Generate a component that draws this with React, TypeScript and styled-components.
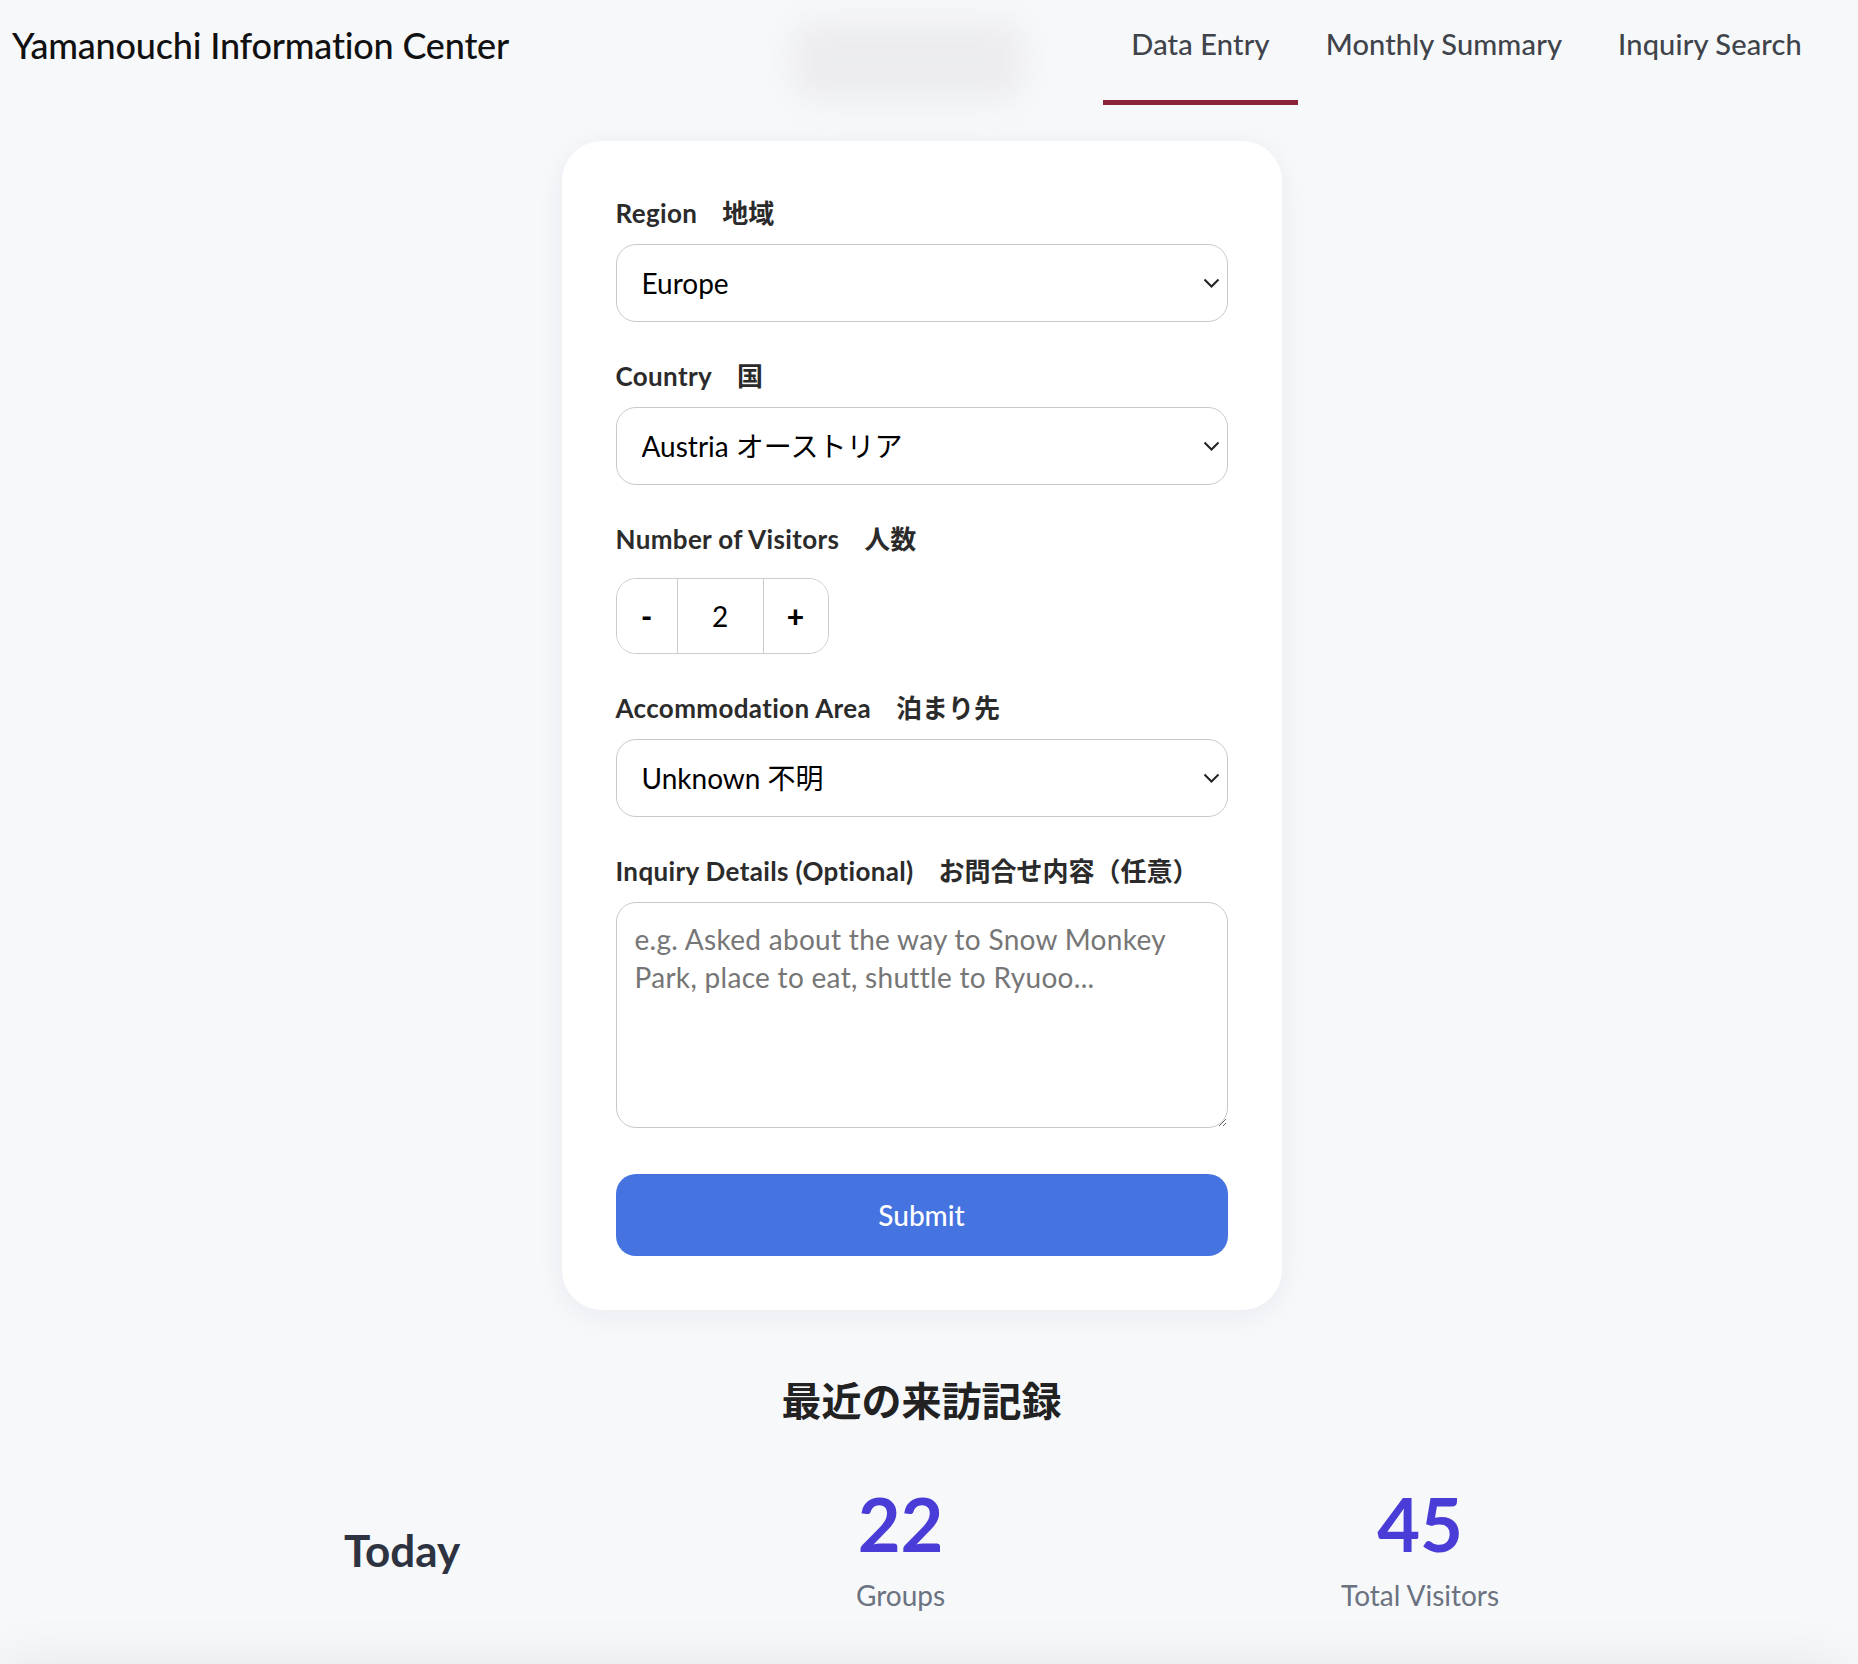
import React, { useState } from "react";
import styled, { createGlobalStyle } from "styled-components";

const GlobalStyle = createGlobalStyle`
  html, body { margin: 0; padding: 0; background: #f7f8fa; }
  html { scrollbar-width: none; }
  ::-webkit-scrollbar { display: none; }
  body {
    font-family: Lato, "Noto Sans CJK JP", sans-serif;
    color: #222;
    -webkit-font-smoothing: antialiased;
  }
  * { box-sizing: border-box; }
`;

const Page = styled.div`
  padding-right: 15px;
  min-height: 1664px;
  overflow: hidden;
`;

const Header = styled.header`
  display: flex;
  align-items: flex-start;
  height: 105px;
  padding: 0 13px 0 12px;
`;

const Brand = styled.h1`
  margin: 24px 0 0;
  font-size: 36px;
  line-height: 1.2;
  font-weight: 500;
  color: #111;
  letter-spacing: -0.2px;
`;

const BlurredLogo = styled.div`
  margin: 22px 80px 0 auto;
  width: 230px;
  height: 78px;
  border-radius: 18px;
  background: #e8e8eb;
  filter: blur(16px);
  opacity: 0.75;
`;

const Nav = styled.nav`
  display: flex;
  height: 105px;
`;

const Tab = styled.a<{ $active?: boolean }>`
  display: block;
  height: 105px;
  padding: 27px 28px 0;
  font-size: 29px;
  line-height: 1.2;
  font-weight: 500;
  letter-spacing: 0.15px;
  color: #3f444b;
  text-decoration: none;
  border-bottom: 5px solid ${(p) => (p.$active ? "#8b2339" : "transparent")};
  cursor: pointer;
`;

const Main = styled.main`
  display: flex;
  flex-direction: column;
  align-items: center;
`;

const Card = styled.form`
  width: 720px;
  margin-top: 36px;
  padding: 54px;
  background: #fff;
  border-radius: 40px;
  box-shadow: 0 6px 30px rgba(20, 30, 60, 0.06);
  display: flex;
  flex-direction: column;
`;

const Field = styled.div`
  display: flex;
  flex-direction: column;
  gap: 13px;
  margin-bottom: 36px;
`;

const Label = styled.label`
  font-size: 26px;
  line-height: 36px;
  font-weight: 700;
  letter-spacing: 0.35px;
  color: #2b2b2b;
`;

const Jp = styled.span`
  margin-left: 25px;
  letter-spacing: 0;
`;

const SelectWrap = styled.div`
  position: relative;
`;

const Select = styled.select`
  appearance: none;
  -webkit-appearance: none;
  width: 100%;
  height: 78px;
  padding: 0 40px 0 25px;
  border: 1px solid #c9c9c9;
  border-radius: 20px;
  background: #fff;
  font-family: inherit;
  font-size: 28px;
  color: #000;
  outline: none;
`;

const Chevron = styled.svg`
  position: absolute;
  right: 8px;
  top: 50%;
  width: 17px;
  height: 10px;
  margin-top: -5px;
  pointer-events: none;
`;

const Stepper = styled.div`
  align-self: flex-start;
  display: flex;
  margin-top: 8px;
  height: 76px;
  border: 1px solid #cccccc;
  border-radius: 20px;
  overflow: hidden;
  background: #fff;
`;

const StepButton = styled.button<{ $w: number }>`
  width: ${(p) => p.$w}px;
  border: none;
  background: #fff;
  font-family: inherit;
  font-size: 30px;
  font-weight: 900;
  color: #000;
  padding: 0;
  cursor: pointer;
`;

const StepInput = styled.input`
  width: 87px;
  border: none;
  border-left: 1px solid #cccccc;
  border-right: 1px solid #cccccc;
  text-align: center;
  font-family: inherit;
  font-size: 28px;
  color: #000;
  outline: none;
`;

const TextArea = styled.textarea`
  width: 100%;
  height: 226px;
  padding: 17px 18px;
  border: 1px solid #c9c9c9;
  border-radius: 20px;
  font-family: inherit;
  font-size: 28px;
  line-height: 38px;
  letter-spacing: 0.3px;
  color: #000;
  resize: vertical;
  outline: none;
  display: block;
  &::placeholder {
    color: #767676;
  }
`;

const Submit = styled.button`
  margin-top: 10px;
  height: 82px;
  border: none;
  border-radius: 20px;
  background: #4573e0;
  color: #fff;
  font-family: inherit;
  font-size: 28px;
  font-weight: 500;
  cursor: pointer;
`;

const SectionTitle = styled.h2`
  margin: 65px 0 0;
  font-family: "Noto Sans CJK JP", sans-serif;
  font-size: 40px;
  line-height: 48px;
  font-weight: 700;
  color: #222;
`;

const StatsRow = styled.div`
  align-self: stretch;
  margin: 64px 146px 0;
  display: flex;
  justify-content: space-around;
  align-items: center;
`;

const Today = styled.div`
  font-size: 44px;
  font-weight: 700;
  color: #2d3340;
`;

const Stat = styled.div`
  display: flex;
  flex-direction: column;
  align-items: center;
`;

const StatNumber = styled.div`
  font-size: 74px;
  line-height: 1;
  font-weight: 700;
  color: #4a3cd6;
`;

const StatLabel = styled.div`
  margin-top: 18px;
  font-size: 28px;
  line-height: 1.2;
  color: #6b7280;
`;

const Records = styled.section`
  align-self: stretch;
  margin: 62px 0 0 0;
  height: 400px;
  background: #f7f8fa;
  box-shadow: 0 -14px 50px rgba(0, 0, 0, 0.07);
`;

const ChevronIcon = () => (
  <Chevron viewBox="0 0 17 10" fill="none">
    <polyline points="1.5,1.5 8.5,8.5 15.5,1.5" stroke="#222" strokeWidth="2" />
  </Chevron>
);

export default function App() {
  const [count, setCount] = useState(2);
  return (
    <>
      <GlobalStyle />
      <Page>
        <Header>
          <Brand>Yamanouchi Information Center</Brand>
          <BlurredLogo />
          <Nav>
            <Tab $active>Data Entry</Tab>
            <Tab>Monthly Summary</Tab>
            <Tab>Inquiry Search</Tab>
          </Nav>
        </Header>
        <Main>
          <Card onSubmit={(e) => e.preventDefault()}>
            <Field>
              <Label>
                Region<Jp>地域</Jp>
              </Label>
              <SelectWrap>
                <Select defaultValue="europe">
                  <option value="europe">Europe</option>
                  <option value="asia">Asia</option>
                  <option value="na">North America</option>
                </Select>
                <ChevronIcon />
              </SelectWrap>
            </Field>
            <Field>
              <Label>
                Country<Jp>国</Jp>
              </Label>
              <SelectWrap>
                <Select defaultValue="at">
                  <option value="at">Austria オーストリア</option>
                  <option value="de">Germany ドイツ</option>
                  <option value="fr">France フランス</option>
                </Select>
                <ChevronIcon />
              </SelectWrap>
            </Field>
            <Field>
              <Label>
                Number of Visitors<Jp>人数</Jp>
              </Label>
              <Stepper>
                <StepButton type="button" $w={60} onClick={() => setCount((c) => Math.max(1, c - 1))}>
                  -
                </StepButton>
                <StepInput value={count} readOnly />
                <StepButton type="button" $w={64} onClick={() => setCount((c) => c + 1)}>
                  +
                </StepButton>
              </Stepper>
            </Field>
            <Field>
              <Label>
                Accommodation Area<Jp>泊まり先</Jp>
              </Label>
              <SelectWrap>
                <Select defaultValue="unknown">
                  <option value="unknown">Unknown 不明</option>
                  <option value="yudanaka">Yudanaka 湯田中</option>
                  <option value="shibu">Shibu 渋</option>
                </Select>
                <ChevronIcon />
              </SelectWrap>
            </Field>
            <Field>
              <Label>
                Inquiry Details (Optional)<Jp>お問合せ内容（任意）</Jp>
              </Label>
              <TextArea placeholder={"e.g. Asked about the way to Snow Monkey\nPark, place to eat, shuttle to Ryuoo..."} />
            </Field>
            <Submit type="submit">Submit</Submit>
          </Card>
          <SectionTitle>最近の来訪記録</SectionTitle>
          <StatsRow>
            <Today>Today</Today>
            <Stat>
              <StatNumber>22</StatNumber>
              <StatLabel>Groups</StatLabel>
            </Stat>
            <Stat>
              <StatNumber>45</StatNumber>
              <StatLabel>Total Visitors</StatLabel>
            </Stat>
          </StatsRow>
          <Records />
        </Main>
      </Page>
    </>
  );
}
